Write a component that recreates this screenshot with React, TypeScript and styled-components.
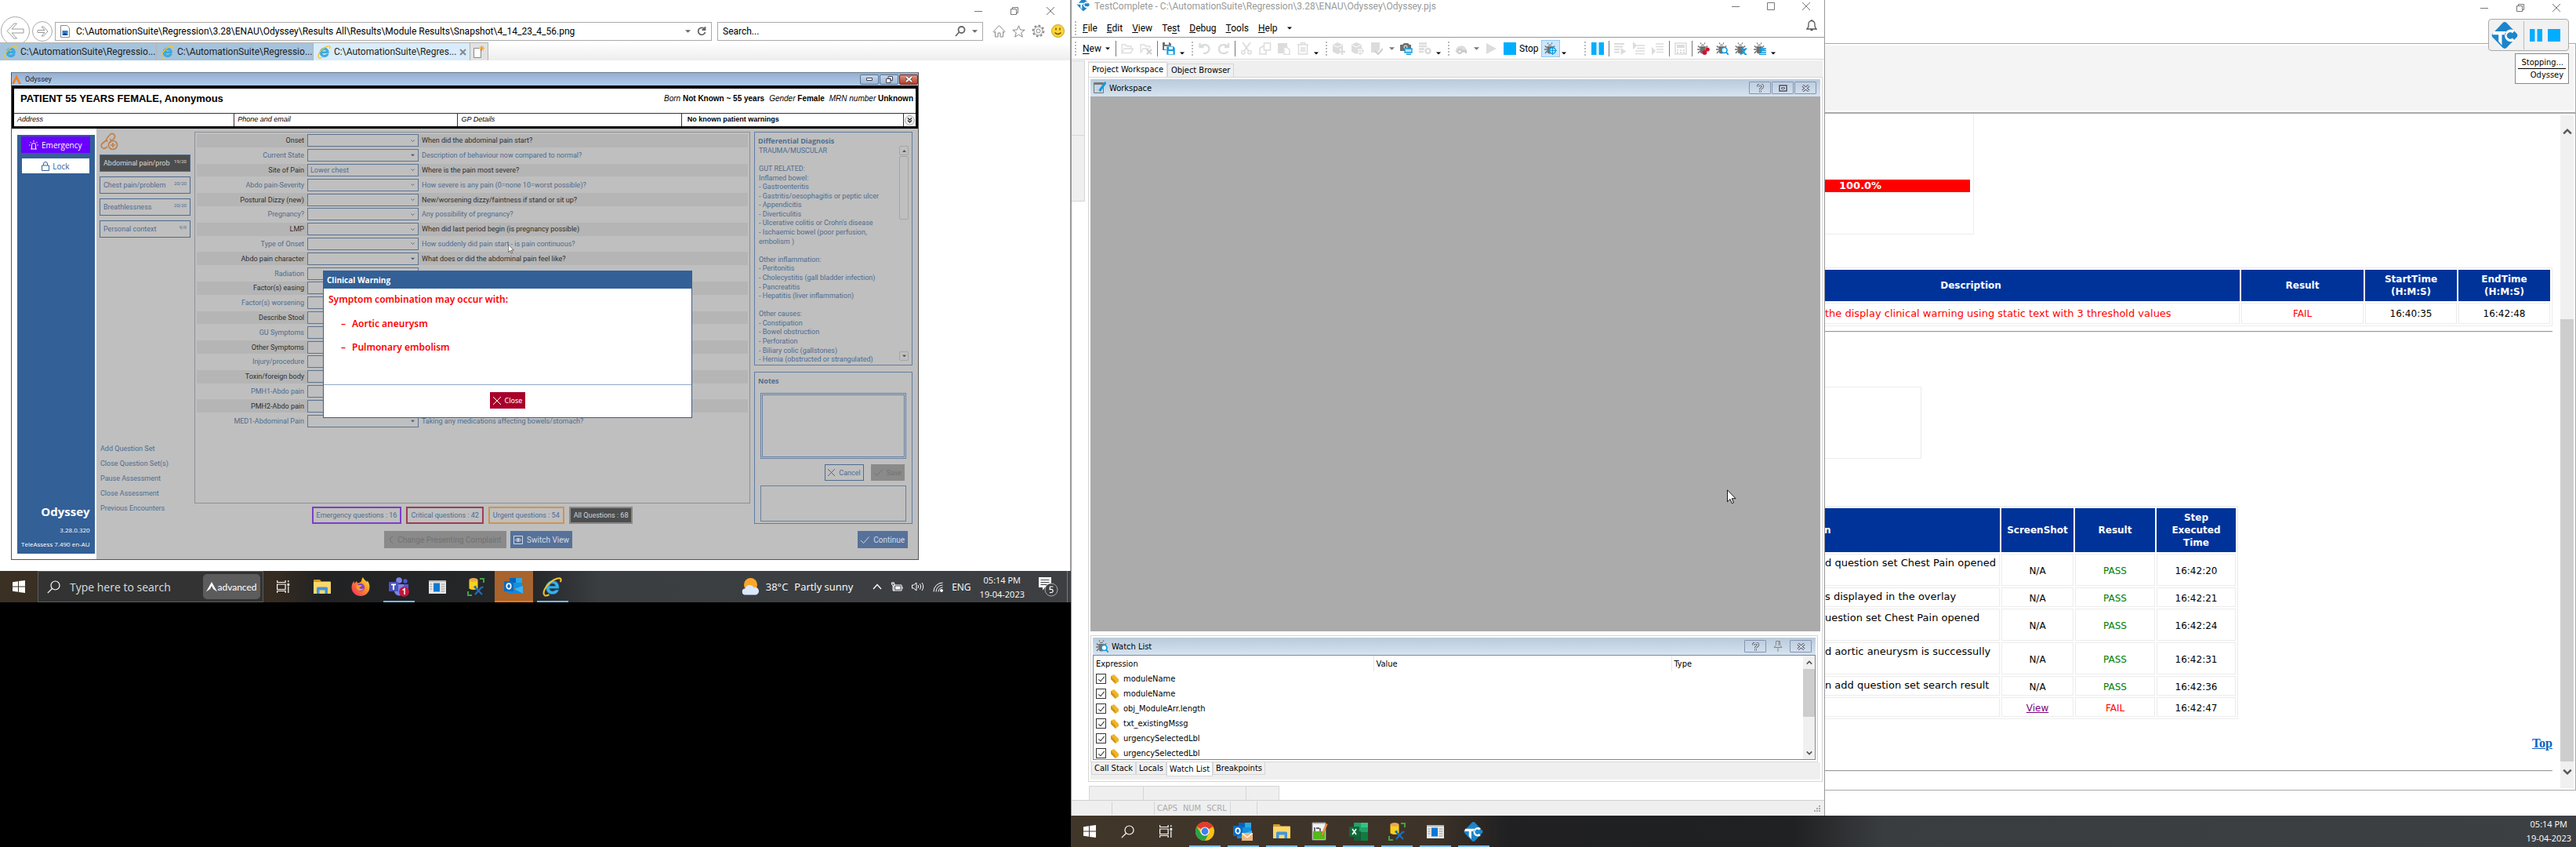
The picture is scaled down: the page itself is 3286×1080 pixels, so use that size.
import React from "react";
import styled, { createGlobalStyle, css } from "styled-components";

const UI = `"Open Sans", "Noto Sans", sans-serif`;
const NARROW = `Roboto, "Open Sans", sans-serif`;
const TAHOMA = `"DejaVu Sans Condensed", "DejaVu Sans", sans-serif`;
const VERDANA = `"DejaVu Sans", sans-serif`;
const ARIAL = `"Liberation Sans", Arial, sans-serif`;

const Global = createGlobalStyle`
  *, *::before, *::after { box-sizing: border-box; }
  body { margin: 0; background: #000; font-family: ${UI}; font-size: 12px; color: #000; }
  button, input, select, textarea { font: inherit; color: inherit; margin: 0; border-radius: 0; }
  button { border: 0; background: none; padding: 0; }
  svg { display: block; flex: none; }
`;

/* ---------- shared ---------- */

const Desktop = styled.div`
  display: flex;
  height: 100vh;
  overflow: hidden;
`;
const LeftMonitor = styled.section`
  flex: 1366 1 0;
  min-width: 0;
  background: #000;
`;
const RightMonitor = styled.section`
  flex: 1920 1 0;
  min-width: 0;
  display: flex;
  flex-direction: column;
`;
const Spacer = styled.div`
  flex: 1;
`;
const Caption = styled.div<{ $gap: number }>`
  display: flex;
  justify-content: flex-end;
  align-items: center;
  gap: ${(p) => p.$gap}px;
`;
const Center = styled.button`
  display: flex;
  align-items: center;
  justify-content: center;
`;

const MinIcon = () => (
  <svg width="10" height="10" viewBox="0 0 10 10"><path d="M0 5.5h10" stroke="#777" fill="none" /></svg>
);
const MaxIcon = () => (
  <svg width="10" height="10" viewBox="0 0 10 10"><path d="M.5.5h9v9h-9z" stroke="#777" fill="none" /></svg>
);
const RestoreIcon = () => (
  <svg width="10" height="10" viewBox="0 0 10 10"><path d="M.5 2.5h7v7h-7zM2.5 2.5v-2h7v7h-2" stroke="#777" fill="none" /></svg>
);
const CloseIcon = ({ c = "#777", s = 10, w = 1 }: { c?: string; s?: number; w?: number }) => (
  <svg width={s} height={s} viewBox="0 0 10 10"><path d="M0 0l10 10M10 0L0 10" stroke={c} strokeWidth={w} fill="none" /></svg>
);
const Down = ({ c = "#666", w = 7 }: { c?: string; w?: number }) => (
  <svg width={w} height="4" viewBox="0 0 8 4"><path d="M0 0h8L4 4z" fill={c} /></svg>
);
const Chevron = ({ up = false, c = "#555", s = 9 }: { up?: boolean; c?: string; s?: number }) => (
  <svg width={s} height={s} viewBox="0 0 10 10"><path d={up ? "M1 7l4-4 4 4" : "M1 3l4 4 4-4"} stroke={c} strokeWidth="2" fill="none" /></svg>
);
const Cursor = () => (
  <svg width="12" height="19" viewBox="0 0 12 19"><path d="M.5.8v15l3.500-3.300 2.300 5.300 2.200-1-2.300-5.100h4.800z" fill="#fff" stroke="#000" strokeWidth=".9" /></svg>
);
const CursorSpot = styled.div<{ $x: number; $y: number }>`
  position: absolute;
  left: ${(p) => p.$x}px;
  top: ${(p) => p.$y}px;
`;

/* ---------- Internet Explorer window ---------- */

const IeWindow = styled.div`
  background: #fff;
  border-right: 1px solid #999;
  padding-bottom: 14px;
  font-family: ${NARROW};
`;
const IeCaption = styled(Caption)`
  height: 27px;
  padding-right: 20px;
`;
const IeNav = styled.div`
  display: flex;
  align-items: center;
  height: 27px;
  padding: 0 7px 2px 1px;
`;
const RoundButton = styled.button<{ $s: number }>`
  flex: none;
  width: ${(p) => p.$s}px;
  height: ${(p) => p.$s}px;
  margin: -8px 3px -8px 0;
  border: 1px solid #a9a9a9;
  border-radius: 50%;
  background: #fff;
  display: flex;
  align-items: center;
  justify-content: center;
`;
const Field = styled.label<{ $w?: number }>`
  display: flex;
  align-items: center;
  gap: 8px;
  height: 24px;
  padding: 0 6px;
  border: 1px solid #aaa;
  ${(p) => (p.$w ? css`width: ${p.$w}px; flex: none; margin: 0 12px 0 7px;` : css`flex: 1;`)}
`;
const FieldInput = styled.input`
  flex: 1;
  min-width: 0;
  border: 0;
  padding: 0;
  background: none;
  outline: 0;
`;
const IeTools = styled.div`
  display: flex;
  gap: 8px;
  align-items: center;
`;
const IeTabs = styled.div`
  display: flex;
  height: 23px;
  background: linear-gradient(#fff, #ededed);
`;
const IeTab = styled.button<{ $on?: boolean }>`
  width: 200px;
  display: flex;
  align-items: center;
  gap: 4px;
  padding-left: 5px;
  border: 1px solid #b4b4b4;
  border-width: 1px 1px 0 0;
  background: ${(p) => (p.$on ? "#d9ecfb" : "#a5c3dc")};
  color: #222;
  white-space: nowrap;
  text-align: left;
`;
const TabText = styled.span`
  flex: 1;
`;
const NewTab = styled(Center)`
  width: 23px;
  border: 1px solid #b4b4b4;
  border-width: 1px 1px 0 0;
  background: #e2e2e2;
`;
const IeIcon = ({ s = 17 }: { s?: number }) => (
  <svg width={s} height={s} viewBox="0 0 22 22">
    <path d="M18.500 12.500H7.800c.2 2.200 1.600 3.300 3.600 3.300 1.500 0 2.500-.5 3.100-1.500h3.700c-1 3-3.500 4.700-6.900 4.700-4.300 0-7.300-2.900-7.300-7.300S7.100 4 11.300 4c4.600 0 7.400 3.200 7.200 8.500zM14.700 10c-.2-1.900-1.400-3-3.400-3-1.900 0-3.200 1.100-3.500 3z" fill="#38b3e8" stroke="#1b80c0" strokeWidth=".6" />
    <path d="M2.500 20.500C-.5 18 3 10 9 5.500 14 1.600 19.500.2 20.500 2c.5.900.2 2.200-.4 3.400M2.500 20.500c1.300.6 3.300 0 5-1" fill="none" stroke="#f5c42c" strokeWidth="1.800" />
  </svg>
);

/* ---------- Odyssey window ---------- */

const OdyWindow = styled.div`
  position: relative;
  margin: 15px 0 0 14px;
  max-width: 1158px;
  border: 1px solid #555;
  border-top-color: #6d7f92;
`;
const OdyTitle = styled.div`
  display: flex;
  align-items: center;
  gap: 5px;
  height: 16px;
  font-size: 9px;
  color: #223;
  background: linear-gradient(#93afd0, #b3cceb);
`;
const AeroButton = styled(Center)<{ $red?: boolean }>`
  width: 24px;
  height: 13px;
  margin-right: -4px;
  border: 1px solid ${(p) => (p.$red ? "#7a2a22" : "#5d7593")};
  border-radius: 2px;
  background: ${(p) => (p.$red ? "linear-gradient(#dd8f80, #bd3c22)" : "linear-gradient(#c4d6ea, #9cb6d4)")};
  &:last-child { margin-right: 0; }
`;
const PatientFrame = styled.div`
  border: 4px solid #000;
  border-width: 4px 3px 3px 3px;
  background: #fff;
  font-family: ${ARIAL};
`;
const PatientTop = styled.div`
  display: flex;
  align-items: center;
  justify-content: space-between;
  height: 31px;
  padding: 0 3px 6px 8px;
  font-size: 10px;
`;
const PatientName = styled.h1`
  margin: 0;
  font-size: 13px;
`;
const Facts = styled.div`
  display: flex;
  gap: 6px;
`;
const PatientCols = styled.div`
  display: grid;
  grid-template-columns: 280fr 285fr 285fr 283fr 16px;
  height: 17px;
  border-top: 1px solid #333;
  font-size: 9px;
  line-height: 15px;
  font-style: italic;
  > * + * { border-left: 1px solid #333; }
  > * { padding-left: 4px; }
  > b { padding-left: 7px; font-style: normal; }
  > button { padding: 0; }
`;
const OdyBody = styled.div`
  display: grid;
  grid-template-columns: 108px 1fr;
  background: #fff;
`;
const SideWrap = styled.div`
  padding: 8px 7px 7px 7px;
  display: flex;
`;
const Side = styled.aside`
  flex: 1;
  display: flex;
  flex-direction: column;
  background: #336097;
  padding: 2px 6px 3px 5px;
  color: #fff;
  font-family: ${UI};
  font-size: 8px;
  text-align: right;
  line-height: 18px;
  white-space: nowrap;
`;
const SideButton = styled(Center)<{ $primary?: boolean }>`
  height: 21px;
  gap: 4px;
  font-size: 10px;
  background: ${(p) => (p.$primary ? "#6a00ff" : "#fff")};
  color: ${(p) => (p.$primary ? "#fff" : "#336097")};
  & + & { height: 19px; margin: 7px 1px 0; }
`;
const Brand = styled.b`
  font-size: 15px;
  line-height: 30px;
`;
const Work = styled.div`
  background: #bfbfbf;
  color: #4f6c8f;
  font-size: 9px;
  display: grid;
  grid-template-columns: 116px 1fr 202px;
  grid-template-rows: 474px 22px 27px;
  column-gap: 5px;
  row-gap: 4px;
  padding: 4px 7px 14px 4px;
`;
const SetColumn = styled.div`
  grid-row: 1 / 3;
  display: flex;
  flex-direction: column;
`;
const SetButton = styled.button<{ $on?: boolean }>`
  display: flex;
  justify-content: space-between;
  height: 22px;
  margin-bottom: 6px;
  padding: 4px 4px 0;
  font-size: 9px;
  line-height: 12px;
  border: 1px solid #4f6c8f;
  background: ${(p) => (p.$on ? "#4d4d4d" : "transparent")};
  color: ${(p) => (p.$on ? "#d8d8d8" : "#4f6c8f")};
  small { font-size: 6px; line-height: 8px; }
`;
const LinkIconBox = styled.div`
  height: 29px;
  padding: 1px 0 0 1px;
`;
const SideLink = styled.a`
  color: #4f6c8f;
  text-decoration: none;
  line-height: 19px;
  padding-left: 1px;
`;
const LinkList = styled.nav`
  margin-top: auto;
  padding-bottom: 10px;
  display: flex;
  flex-direction: column;
`;
const Questions = styled.div`
  border: 1px solid #8e9097;
  padding: 2px 2px 0;
`;
const QuestionList = styled.div`
  display: grid;
  grid-template-rows: repeat(20, 1fr);
  height: 376px;
`;
const Question = styled.label<{ $alt?: boolean }>`
  display: grid;
  grid-template-columns: 137px 142px 1fr;
  align-items: center;
  column-gap: 4px;
  margin-bottom: 2px;
  background: ${(p) => (p.$alt ? "#b5b5b5" : "transparent")};
  color: ${(p) => (p.$alt ? "#2e2e2e" : "#4f6c8f")};
  > :first-child { text-align: right; }
  white-space: nowrap;
`;
const SelectBox = styled.span`
  display: grid;
  align-items: center;
  height: 16px;
  border: 1px solid #5d7592;
  background: #bfbfbf;
  color: #4f6c8f;
  > * { grid-area: 1 / 1; }
  > svg { justify-self: end; margin-right: 4px; pointer-events: none; }
`;
const Select = styled.select`
  appearance: none;
  width: 100%;
  border: 0;
  outline: 0;
  padding: 0 3px;
  background: none;
`;
const SideStack = styled.div`
  grid-row: 1 / 3;
  grid-column: 3;
  display: flex;
  flex-direction: column;
  gap: 8px;
`;
const Panel = styled.section<{ $h: number }>`
  height: ${(p) => p.$h}px;
  border: 1px solid #5f7da3;
  padding: 5px 4px 2px 4px;
  display: flex;
  flex-direction: column;
`;
const PanelTitle = styled.h2`
  margin: 0;
  font-family: ${UI};
  font-size: 9px;
  line-height: 12px;
`;
const DiagBody = styled.div`
  display: grid;
  grid-template-columns: 1fr 12px;
  flex: 1;
  min-height: 0;
`;
const DiagText = styled.div`
  overflow: hidden;
  padding-left: 1px;
  display: grid;
  grid-template-rows: repeat(24, 1fr);
  height: 278px;
  align-items: center;
  white-space: nowrap;
`;
const DiagScroll = styled.div`
  display: flex;
  flex-direction: column;
  justify-content: space-between;
  padding-bottom: 4px;
`;
const ScrollBit = styled(Center)<{ $h: number }>`
  height: ${(p) => p.$h}px;
  border: 1px solid #a5a5a5;
  border-radius: 2px;
`;
const ScrollTop = styled.div`
  display: grid;
  gap: 1px;
`;
const Notes = styled.textarea<{ $h: number }>`
  display: block;
  height: ${(p) => p.$h}px;
  margin: 9px 3px 0 3px;
  border: ${(p) => (p.$h > 60 ? "3px double" : "1px solid")} #6581a5;
  background: none;
  resize: none;
  outline: 0;
`;
const Actions = styled.div`
  display: flex;
  gap: 9px;
  justify-content: flex-end;
  padding: 7px 5px 0 0;
  & + textarea { margin-top: 6px; }
`;
const FlatButton = styled(Center)<{ $kind?: "blue" | "grey" | "dark" | "line" | "red"; $line?: string }>`
  height: 21px;
  gap: 5px;
  padding: 0 3px;
  white-space: nowrap;
  font-size: 9px;
  border: 1px solid ${(p) => p.$line || "transparent"};
  ${(p) => p.$kind === "blue" && css`background: #56719a; color: #d4dbe4; font-size: 10px;`}
  ${(p) => p.$kind === "grey" && css`background: #8a8a8a; color: #727272;`}
  ${(p) => p.$kind === "dark" && css`background: #4d4d4d; color: #d5d5d5; border-color: #888;`}
  ${(p) => p.$kind === "red" && css`background: #a8002b; color: #fff;`}
`;
const ChangeButton = styled(FlatButton)`
  font-size: 10px;
  width: 156px;
`;
const Filters = styled.div`
  grid-column: 2;
  display: flex;
  justify-content: center;
  gap: 6px;
  > button { height: 22px; padding: 0 4px; border-width: 2px; }
`;
const BottomBar = styled.div`
  grid-column: 2 / 4;
  padding-top: 5px;
  display: grid;
  grid-template-columns: 1fr 202px;
  > div { display: flex; justify-content: center; gap: 5px; padding-left: 10px; }
  > div + div { justify-content: flex-end; padding-right: 6px; }
  button { height: 22px; }
`;
const Dialog = styled.div`
  position: absolute;
  left: 397px;
  top: 252px;
  width: 471px;
  height: 188px;
  display: flex;
  flex-direction: column;
  background: #fff;
  border: 1px solid #336097;
  color: #f00;
  font-family: "Noto Sans", ${UI};
`;
const DialogTitle = styled.h2`
  margin: 0;
  padding-left: 4px;
  background: #336097;
  color: #fff;
  font-family: ${UI};
  font-size: 10px;
  line-height: 22px;
`;
const DialogBody = styled.div`
  flex: 1;
  padding: 4px 6px;
  font-size: 12px;
  font-weight: 600;
  line-height: 20px;
`;
const DialogList = styled.ul`
  list-style: none;
  margin: 6px 0 0;
  padding: 0 0 0 16px;
  line-height: 30px;
  li { display: flex; gap: 8px; }
`;
const DialogFoot = styled.div`
  height: 42px;
  display: flex;
  justify-content: center;
  padding-top: 9px;
  border-top: 1px solid #8faacb;
`;

const questions: [string, string, string?, boolean?][] = [
  ["Onset", "When did the abdominal pain start?"],
  ["Current State", "Description of behaviour now compared to normal?", "", true],
  ["Site of Pain", "Where is the pain most severe?", "Lower chest"],
  ["Abdo pain-Severity", "How severe is any pain (0=none 10=worst possible)?"],
  ["Postural Dizzy (new)", "New/worsening dizzy/faintness if stand or sit up?"],
  ["Pregnancy?", "Any possibility of pregnancy?"],
  ["LMP", "When did last period begin (is pregnancy possible)"],
  ["Type of Onset", "How suddenly did pain start - is pain continuous?"],
  ["Abdo pain character", "What does or did the abdominal pain feel like?", "", true],
  ["Radiation", ""],
  ["Factor(s) easing", ""],
  ["Factor(s) worsening", ""],
  ["Describe Stool", ""],
  ["GU Symptoms", ""],
  ["Other Symptoms", ""],
  ["Injury/procedure", ""],
  ["Toxin/foreign body", ""],
  ["PMH1-Abdo pain", ""],
  ["PMH2-Abdo pain", ""],
  ["MED1-Abdominal Pain", "Taking any medications affecting bowels/stomach?", "", true],
];
const diagnosis = [
  "TRAUMA/MUSCULAR", "", "GUT RELATED:", "Inflamed bowel:", "- Gastroenteritis",
  "- Gastritis/oesophagitis or peptic ulcer", "- Appendicitis", "- Diverticulitis",
  "- Ulcerative colitis or Crohn's disease", "- Ischaemic bowel (poor perfusion,", "embolism )", "",
  "Other inflammation:", "- Peritonitis", "- Cholecystitis (gall bladder infection)", "- Pancreatitis",
  "- Hepatitis (liver inflammation)", "", "Other causes:", "- Constipation", "- Bowel obstruction",
  "- Perforation", "- Biliary colic (gallstones)", "- Hernia (obstructed or strangulated)",
];

const Tick = ({ c }: { c: string }) => (
  <svg width="11" height="9" viewBox="0 0 11 9"><path d="M0 5l3.500 3.500L10.500.5" stroke={c} fill="none" /></svg>
);

function Odyssey() {
  return (
    <OdyWindow>
      <OdyTitle>
        <svg width="12" height="12" viewBox="0 0 12 12"><path d="M0 12L6 0l6 12H9L6 6l-3 6z" fill="#f58220" /></svg>
        Odyssey
        <Spacer />
        <AeroButton aria-label="Minimise"><svg width="8" height="4" viewBox="0 0 8 4"><path d="M.5.5h7v3h-7z" fill="#fff" stroke="#445" /></svg></AeroButton>
        <AeroButton aria-label="Restore"><svg width="9" height="9" viewBox="0 0 9 9"><path d="M3 .5h5.500v5H6V3H3zM.5 3.500H6v5H.5z" fill="#fff" stroke="#445" /></svg></AeroButton>
        <AeroButton $red aria-label="Close"><svg width="9" height="8" viewBox="0 0 9 8"><path d="M1 1l7 6M8 1L1 7" stroke="#444" strokeWidth="3.400" /><path d="M1 1l7 6M8 1L1 7" stroke="#fff" strokeWidth="2" /></svg></AeroButton>
      </OdyTitle>
      <PatientFrame>
        <PatientTop>
          <PatientName>PATIENT 55 YEARS FEMALE, Anonymous</PatientName>
          <Facts>
            <span><i>Born</i> <b>Not Known ~ 55 years</b></span>
            <span><i>Gender</i> <b>Female</b></span>
            <span><i>MRN number</i> <b>Unknown</b></span>
          </Facts>
        </PatientTop>
        <PatientCols>
          <span>Address</span>
          <span>Phone and email</span>
          <span>GP Details</span>
          <b>No known patient warnings</b>
          <Center aria-label="Expand"><svg width="13" height="13" viewBox="0 0 13 13"><circle cx="6.500" cy="6.500" r="6" fill="#eee" stroke="#aaa" /><path d="M4 3.500L6.500 6 9 3.500M4 6.500L6.500 9 9 6.500" stroke="#222" strokeWidth="1.200" fill="none" /></svg></Center>
        </PatientCols>
      </PatientFrame>
      <OdyBody>
        <SideWrap>
          <Side>
            <SideButton $primary>
              <svg width="12" height="12" viewBox="0 0 12 12"><path d="M2 11h8M3.500 11V6a2.500 2.500 0 015 0v5M6 0v2M1.500 2L3 3.500M10.500 2L9 3.500M0 6h1.500M10.500 6H12" stroke="#fff" fill="none" /></svg>
              Emergency
            </SideButton>
            <SideButton>
              <svg width="10" height="12" viewBox="0 0 10 12"><path d="M.5 5h9v6.500h-9zM2.500 5V3a2.500 2.500 0 015 0v2" stroke="#336097" fill="none" /></svg>
              Lock
            </SideButton>
            <Spacer />
            <Brand>Odyssey</Brand>
            <span>3.28.0.320</span>
            <span>TeleAssess 7.490 en-AU</span>
          </Side>
        </SideWrap>
        <Work>
          <SetColumn>
            <LinkIconBox>
              <svg width="23" height="23" viewBox="0 0 23 23" fill="none" stroke="#c08048" strokeWidth="1.700"><path d="M9 11.500a3.500 3.500 0 010-5l3.500-4a3.500 3.500 0 015 5L15 10M12.500 8a3.500 3.500 0 010 5M8 9.500L2.500 14a3.500 3.500 0 004.500 5.500l2-1.500" /><circle cx="16" cy="16" r="5.500" /><path d="M16 13v6M13 16h6" /></svg>
            </LinkIconBox>
            <SetButton $on>Abdominal pain/prob<small>19/20</small></SetButton>
            <SetButton>Chest pain/problem<small>20/20</small></SetButton>
            <SetButton>Breathlessness<small>20/20</small></SetButton>
            <SetButton>Personal context<small>9/9</small></SetButton>
            <LinkList>
              {["Add Question Set", "Close Question Set(s)", "Pause Assessment", "Close Assessment", "Previous Encounters"].map((t) => (
                <SideLink href="#" key={t}>{t}</SideLink>
              ))}
            </LinkList>
          </SetColumn>
          <Questions>
            <QuestionList>
              {questions.map(([label, hint, value, solid], i) => (
                <Question key={label} $alt={i % 2 === 0}>
                  <span>{label}</span>
                  <SelectBox>
                    <Select aria-label={label}><option>{value || ""}</option></Select>
                    {solid ? <Down c="#3d5675" w={5} /> : <Chevron c="#4f6c8f" s={5} />}
                  </SelectBox>
                  <span>{hint}</span>
                </Question>
              ))}
            </QuestionList>
          </Questions>
          <SideStack>
            <Panel $h={298}>
              <PanelTitle>Differential Diagnosis</PanelTitle>
              <DiagBody>
                <DiagText>{diagnosis.map((t, i) => <span key={i}>{t}</span>)}</DiagText>
                <DiagScroll>
                  <ScrollTop>
                    <ScrollBit $h={12} aria-label="Scroll up"><svg width="5" height="3" viewBox="0 0 6 3"><path d="M0 3h6L3 0z" fill="#444" /></svg></ScrollBit>
                    <ScrollBit $h={81} aria-label="Scroll thumb" />
                  </ScrollTop>
                  <ScrollBit $h={12} aria-label="Scroll down"><Down c="#444" w={5} /></ScrollBit>
                </DiagScroll>
              </DiagBody>
            </Panel>
            <Panel $h={194}>
              <PanelTitle>Notes</PanelTitle>
              <Notes $h={88} aria-label="Notes" />
              <Actions>
                <FlatButton $line="#4f6c8f"><CloseIcon c="#3c5d88" s={9} />Cancel</FlatButton>
                <FlatButton $kind="grey"><Tick c="#727272" />Save</FlatButton>
              </Actions>
              <Notes $h={48} aria-label="Saved notes" readOnly />
            </Panel>
          </SideStack>
          <Filters>
            <FlatButton $line="#7a3fc8">Emergency questions : 16</FlatButton>
            <FlatButton $line="#9c3d54">Critical questions : 42</FlatButton>
            <FlatButton $line="#cf9350">Urgent questions : 54</FlatButton>
            <FlatButton $kind="dark">All Questions : 68</FlatButton>
          </Filters>
          <BottomBar>
            <div>
              <ChangeButton $kind="grey"><svg width="6" height="10" viewBox="0 0 6 10"><path d="M5 0L1 5l4 5" stroke="#727272" fill="none" /></svg>Change Presenting Complaint</ChangeButton>
              <FlatButton $kind="blue"><svg width="12" height="11" viewBox="0 0 12 11"><path d="M.5.5h11v10H.5zM2.500 5.500Q6 1.500 9.500 5.500 6 9.500 2.500 5.500z" stroke="#d4dbe4" fill="none" /><circle cx="6" cy="5.500" r="1.400" fill="#d4dbe4" /></svg>Switch View</FlatButton>
            </div>
            <div>
              <FlatButton $kind="blue"><Tick c="#d4dbe4" />Continue</FlatButton>
            </div>
          </BottomBar>
        </Work>
      </OdyBody>
      <Dialog role="dialog" aria-label="Clinical Warning">
        <DialogTitle>Clinical Warning</DialogTitle>
        <DialogBody>
          Symptom combination may occur with:
          <DialogList>
            <li><span>–</span>Aortic aneurysm</li>
            <li><span>–</span>Pulmonary embolism</li>
          </DialogList>
        </DialogBody>
        <DialogFoot>
          <FlatButton $kind="red"><CloseIcon c="#fff" s={10} />Close</FlatButton>
        </DialogFoot>
      </Dialog>
      <CursorSpot $x={633} $y={218}><svg width="8" height="13" viewBox="0 0 12 19"><path d="M.5.8v15l3.500-3.300 2.300 5.300 2.200-1-2.300-5.100h4.800z" fill="#fff" stroke="#333" /></svg></CursorSpot>
    </OdyWindow>
  );
}

/* ---------- taskbars ---------- */

const Bar = styled.footer<{ $bg: string }>`
  display: flex;
  flex: none;
  height: 40px;
  background: ${(p) => p.$bg};
  color: #fff;
`;
const TaskCell = styled(Center)<{ $w?: number; $line?: string; $hot?: boolean }>`
  width: ${(p) => p.$w || 49}px;
  position: relative;
  ${(p) => p.$hot && css`background: #a9632c;`}
  &::after {
    content: "";
    position: absolute;
    bottom: 0;
    left: ${(p) => (p.$hot ? 0 : 5)}px;
    right: ${(p) => (p.$hot ? 0 : 4)}px;
    height: 2px;
    background: ${(p) => p.$line || "transparent"};
  }
`;
const SearchBox = styled.label`
  display: flex;
  align-items: center;
  gap: 12px;
  width: 288px;
  padding: 0 3px 0 11px;
  background: #333;
  border: 1px solid #5b5b5b;
`;
const SearchInput = styled.input`
  flex: 1;
  min-width: 0;
  border: 0;
  outline: 0;
  padding: 0;
  background: none;
  font-size: 14px;
  color: #ddd;
  &::placeholder { color: #ddd; opacity: 1; }
`;
const AdvPill = styled.span`
  display: flex;
  align-items: center;
  justify-content: center;
  width: 73px;
  height: 32px;
  border-radius: 5px;
  background: #5c5c5c;
  font-size: 12px;
  font-family: Lato, sans-serif;
  color: #fff;
`;
const Tray = styled.div`
  display: flex;
  align-items: center;
  gap: 11px;
  font-size: 12px;
`;
const Weather = styled.span`
  display: flex;
  align-items: center;
  gap: 8px;
  margin-right: 14px;
  font-size: 13px;
`;
const Clock = styled.time<{ $pad: number }>`
  padding: 2px ${(p) => p.$pad}px 0 0;
  text-align: center;
  font-size: 11px;
  line-height: 18px;
  color: #fff;
`;
const TrayEnd = styled.div`
  align-self: stretch;
  width: 5px;
  border-left: 1px solid #777;
`;

const WinLogo = () => (
  <svg width="16" height="16" viewBox="0 0 16 16" fill="#fff"><path d="M0 2.300L7 1.300V7.500H0zM8 1.100L16 0v7.500H8zM0 8.500h7v6.200L0 13.700zM8 8.500h8V16l-8-1.100z" /></svg>
);
const SearchGlyph = () => (
  <svg width="17" height="17" viewBox="0 0 17 17" fill="none" stroke="#fff" strokeWidth="1.200"><circle cx="10.500" cy="6.500" r="5.500" /><path d="M6.500 10.500L.8 16.200" /></svg>
);
const TaskView = () => (
  <svg width="17" height="16" viewBox="0 0 17 16" fill="none" stroke="#fff" strokeWidth="1.200"><path d="M.6 0v2.500h10.500V0M.6 5h10.500v6.500H.6zM.6 16v-2.500h10.500V16M14.800 0v2.500M14.800 7.500V16" /><path d="M13.500 4h2.700v2.800h-2.700z" fill="#fff" stroke="none" /></svg>
);
const Folder = () => (
  <svg width="22" height="18" viewBox="0 0 22 18"><path d="M0 1q0-1 1-1h7l2 2.500H0z" fill="#d99c1e" /><path d="M0 2.500h21q1 0 1 1V18H0z" fill="#ffd76a" /><path d="M4 18v-7q0-1.500 1.500-1.500h11Q18 9.500 18 11v7h-3.500v-4.500h-7V18z" fill="#3f97dd" /></svg>
);
const Firefox = () => (
  <svg width="24" height="24" viewBox="0 0 24 24">
    <defs><linearGradient id="ff" x1="1" y1="0" x2="0" y2="1"><stop offset="0" stopColor="#fff04a" /><stop offset=".4" stopColor="#ff9322" /><stop offset="1" stopColor="#f0256b" /></linearGradient></defs>
    <path d="M15 0c1 3 3.500 4 5 6 1-.5.500-2 .500-2 3 4 3.500 8 2.500 12-1.500 5-6 8-11 8C6 24 .5 19.500.5 13 .5 9 2 7 3.500 5L4 8l3-3 1 2.500c2 0 4-1 5-2.500.500-2 .500-3.500 2-5z" fill="url(#ff)" /><circle cx="12" cy="13" r="5" fill="#7a3fd0" /><path d="M6 11c3-2 5 0 8-1-1 2.500-3 2-3.500 3.500 1 2 4 1.500 5.500.500-1 3.500-6 4.500-8.500 1.500z" fill="#ff9a2e" />
  </svg>
);
const Teams = () => (
  <svg width="26" height="25" viewBox="0 0 26 25">
    <circle cx="13" cy="4" r="3.800" fill="#7b83eb" /><circle cx="21" cy="5" r="2.700" fill="#5059c9" /><path d="M17 9h8v7a4 4 0 01-8 2z" fill="#5059c9" /><path d="M7 9h12v8a6 6 0 01-12 1z" fill="#7b83eb" /><path d="M0 6h12v12H0z" fill="#4b53bc" /><path d="M3 8.500h6v1.800H7V16H5v-5.700H3z" fill="#fff" /><circle cx="19.500" cy="18.500" r="6.500" fill="#c4163a" /><path d="M17.500 16.500l2.500-1.800V22" stroke="#fff" strokeWidth="1.500" fill="none" />
  </svg>
);
const AppWindow = () => (
  <svg width="22" height="17" viewBox="0 0 22 17"><path d="M0 0h22v17H0z" fill="#e8e8e8" /><path d="M0 0h22v2H0z" fill="#b8b8b8" /><path d="M6 3.500h8v11H6z" fill="#0a78d4" /><path d="M1.500 5h3M1.500 8h3M1.500 11h3M15.500 5h5M15.500 8h5M15.500 11h5M15.500 14h5" stroke="#999" /></svg>
);
const DbTool = () => (
  <svg width="22" height="23" viewBox="0 0 22 23"><path d="M2.500 3v10.500q5.500 3 11 0V3z" fill="#fbd21a" /><ellipse cx="8" cy="2.500" rx="5.500" ry="2.400" fill="#e9a94c" /><path d="M16 1h5v5M1 17v5h5" stroke="#3fa344" strokeWidth="2" fill="none" /><path d="M10 21l8-9M10 12l9 9M8.500 12l3-1.500M17 12.500l3.500-1" stroke="#1a6fc0" strokeWidth="2.200" /></svg>
);
const Outlook = ({ mail = false }: { mail?: boolean }) => (
  <svg width="25" height="24" viewBox="0 0 25 24"><path d="M7 1h16v13H7z" fill="#1490df" /><path d="M7 1h8v6H7z" fill="#0364b8" /><path d="M15 1h8v6h-8z" fill="#28a8ea" /><path d="M5 11l10 5 9-5v10H5z" fill="#1a85d8" /><path d="M24 11v10L13 15z" fill="#38b6f5" /><path d="M0 5h12v13H0z" fill="#0a6cc4" /><ellipse cx="6" cy="11.500" rx="2.700" ry="3.300" fill="none" stroke="#fff" strokeWidth="1.700" />{mail && <path d="M11 14h14v10H11z" fill="#ebb77c" />}{mail && <path d="M11.500 14.500l6.500 5.500 6.500-5.500" stroke="#fff" strokeWidth="1.300" fill="none" />}</svg>
);
const Chrome = () => (
  <svg width="24" height="24" viewBox="0 0 24 24"><circle cx="12" cy="12" r="12" fill="#fbc116" /><path d="M12 12L1.600 6a12 12 0 0120.800 0z" fill="#e33b2e" /><path d="M1.600 6L7.200 15 12 12l4.700 3L12 24A12 12 0 011.600 6z" fill="#2ba24c" /><circle cx="12" cy="12" r="5.600" fill="#fff" /><circle cx="12" cy="12" r="4.400" fill="#3f7ff0" /></svg>
);
const Notepad = () => (
  <svg width="21" height="24" viewBox="0 0 21 24"><path d="M1 1h17v22H1z" fill="#f4f4f4" stroke="#888" /><path d="M2 12h15v10H2z" fill="#56b81c" /><path d="M4 7v5M6 8h4M11 8v4" stroke="#333" strokeWidth="1.400" /><path d="M3 2h14" stroke="#777" strokeDasharray="1 1" /><path d="M18.500 2l2 1-6 14-2 1 .5-2.500z" fill="#f0a030" stroke="#a55" strokeWidth=".5" /></svg>
);
const Excel = () => (
  <svg width="24" height="23" viewBox="0 0 24 23"><path d="M6 0h9v11H6z" fill="#21a366" /><path d="M15 0h9v6h-9z" fill="#33c481" /><path d="M15 6h9v6h-9z" fill="#21a366" /><path d="M6 11h9v12H6z" fill="#185c37" /><path d="M15 12h9v11h-9z" fill="#107c41" /><path d="M0 5h13v13H0z" fill="#0e6b38" /><path d="M4 8l5 7M9 8l-5 7" stroke="#fff" strokeWidth="1.700" /></svg>
);
const TcLogo = ({ s = 24 }: { s?: number }) => (
  <svg width={s} height={s} viewBox="0 0 24 24"><path d="M12 0q1 0 2 1l9 9.500q1.200 1.500 0 3L14 23q-2 2-4 0L1 13.500q-1.200-1.500 0-3L10 1q1-1 2-1z" fill="#1d85c9" /><path d="M2 8.500h11v3H9.500V21l-3-3.500v-6H1zM21 8a5.500 5.500 0 100 8.500l-2-2a3 3 0 110-4.500z" fill="#fff" /></svg>
);

/* ---------- TestComplete ---------- */

const RightTop = styled.div`
  flex: 1;
  min-height: 0;
  display: flex;
`;
const TcWindow = styled.div`
  position: relative;
  flex: 961 1 0;
  min-width: 0;
  display: flex;
  flex-direction: column;
  background: #fff;
  border: 1px solid #999;
  border-width: 0 1px;
  font-family: ${NARROW};
`;
const TcTitle = styled.div`
  display: flex;
  align-items: center;
  gap: 6px;
  height: 16px;
  padding: 0 18px 0 7px;
  color: #999;
  > svg { margin-top: -4px; }
`;
const MenuRow = styled.nav`
  display: flex;
  align-items: center;
  height: 32px;
  padding: 8px 9px 0 0;
  border-bottom: 1px solid #999;
  > svg:last-child { margin-top: -6px; }
`;
const MenuItem = styled.button`
  margin-right: 12px;
  &::first-letter { text-decoration: underline; }
`;
const MenuPlain = styled(MenuItem)`
  &::first-letter { text-decoration: none; }
`;
const Toolbar = styled.div`
  display: flex;
  align-items: center;
  height: 28px;
  border-bottom: 1px solid #d6d6d6;
`;
const Grip = styled.span<{ $lead?: boolean }>`
  flex: none;
  width: ${(p) => (p.$lead ? 14 : 12)}px;
  height: 20px;
  background: radial-gradient(circle, #bbb 1px, transparent 1px) ${(p) => (p.$lead ? 3 : 6)}px 0 / 4px 4px repeat-y;
`;
const Sep = styled.span`
  flex: none;
  width: 1px;
  height: 20px;
  margin: 0 2px;
  background: #777;
`;
const Tool = styled(Center)<{ $w?: number; $on?: boolean }>`
  flex: none;
  width: ${(p) => p.$w || 24}px;
  height: 22px;
  ${(p) => p.$on && css`background: #cce6fb; outline: 1px solid #90c8f6; outline-offset: -1px;`}
`;
const CaretCell = styled.span`
  flex: none;
  width: 10px;
  display: flex;
  justify-content: center;
  padding-top: 12px;
`;
const NewButton = styled.button`
  width: 40px;
  display: flex;
  align-items: center;
  gap: 5px;
  text-align: left;
`;
const StopText = styled.button`
  width: 28px;
  text-align: left;
`;
const Under = styled.u`
  text-underline-offset: 2px;
`;
const TcBody = styled.div`
  flex: 1;
  min-height: 0;
  display: grid;
  grid-template-columns: 17px 1fr;
  column-gap: 4px;
  padding: 1px 2px 5px 0;
`;
const Strip = styled.div`
  height: 180px;
  background: #efefef;
  border: 1px solid #d6d6d6;
  border-left: 0;
  &::before {
    content: "";
    display: block;
    height: 95px;
    border-bottom: 1px solid #d6d6d6;
  }
`;
const WorkCol = styled.div`
  display: flex;
  flex-direction: column;
  min-width: 0;
  min-height: 0;
`;
const TopTabs = styled.div`
  display: flex;
  align-items: flex-end;
  height: 21px;
  background: #efefef;
`;
const TopTab = styled.button<{ $on?: boolean }>`
  height: ${(p) => (p.$on ? 19 : 17)}px;
  padding: 0 4px;
  border: 1px solid #d6d6d6;
  border-bottom: 0;
  background: ${(p) => (p.$on ? "#fff" : "#efefef")};
  font-family: ${TAHOMA};
  font-size: 11px;
  line-height: 16px;
  white-space: nowrap;
`;
const Frame = styled.div`
  flex: 1;
  min-height: 0;
  display: flex;
  flex-direction: column;
  border: 1px solid #d6d6d6;
  padding: 2px;
`;
const PaneHead = styled.div`
  flex: none;
  display: flex;
  align-items: center;
  gap: 4px;
  height: 22px;
  padding: 0 5px 0 4px;
  font-family: ${TAHOMA};
  font-size: 11px;
  background: linear-gradient(#b9cadb, #d6e3f0);
`;
const PaneButton = styled(Center)<{ $flat?: boolean }>`
  width: 28px;
  height: 16px;
  border: 1px solid ${(p) => (p.$flat ? "transparent" : "#8794b3")};
  border-radius: 1px;
  & + & { margin-left: -3px; }
`;
const Canvas = styled.div`
  flex: 1;
  background: #ababab;
`;
const WatchFrame = styled.div`
  flex: none;
  margin: 5px 3px 0 0;
  border: 1px solid #d6d6d6;
  padding: 2px;
`;
const WatchBox = styled.div`
  display: flex;
  height: 134px;
  border: 1px solid #83878f;
`;
const WatchClip = styled.div`
  flex: 1;
  overflow: hidden;
`;
const WatchTable = styled.table`
  width: 100%;
  table-layout: fixed;
  border-collapse: collapse;
  font-family: ${TAHOMA};
  font-size: 11px;
  th { height: 20px; padding: 0 3px; text-align: left; font-weight: normal; border-right: 1px solid #e5e5e5; }
  th:last-child { border: 0; }
  td { height: 19px; padding: 0 3px; }
`;
const WatchLabel = styled.label`
  display: flex;
  align-items: center;
  gap: 6px;
  line-height: 16px;
`;
const Check = styled.input`
  appearance: none;
  width: 13px;
  height: 13px;
  border: 1px solid #333;
  background: #fff;
  display: grid;
  place-items: center;
  &:checked::after {
    content: "";
    width: 4px;
    height: 8px;
    margin-top: -2px;
    border: solid #333;
    border-width: 0 1px 1px 0;
    transform: rotate(40deg);
  }
`;
const VScroll = styled.div<{ $w: number }>`
  flex: none;
  width: ${(p) => p.$w}px;
  display: flex;
  flex-direction: column;
  background: #f0f0f0;
`;
const ScrollArrow = styled(Center)<{ $h: number }>`
  height: ${(p) => p.$h}px;
`;
const Thumb = styled.div<{ $h: number; $top?: number }>`
  height: ${(p) => p.$h}px;
  margin-top: ${(p) => p.$top || 0}px;
  background: #cdcdcd;
`;
const BottomTabs = styled.div`
  flex: none;
  display: flex;
  height: 22px;
  padding-left: 1px;
  background: #efefef;
`;
const BottomTab = styled(TopTab)`
  height: ${(p) => (p.$on ? 18 : 16)}px;
  padding: 0 3px;
  border: 1px solid #d6d6d6;
  border-top: 0;
`;
const DockRow = styled.div`
  display: grid;
  grid-template-columns: 69px 131px 43px;
  height: 18px;
  margin-left: 22px;
  > span { background: #efefef; border: 1px solid #d6d6d6; border-width: 1px 0 0 1px; }
  > span:last-child { border-right-width: 1px; }
`;
const StatusBar = styled.div`
  display: grid;
  grid-template-columns: 52px 54px 97px 34px 1fr 14px;
  align-items: center;
  height: 20px;
  border-top: 1px solid #d0d0d0;
  background: #efefef;
`;
const StatusCell = styled.span<{ $bare?: boolean }>`
  display: flex;
  gap: 7px;
  height: 17px;
  padding-left: 3px;
  border-right: ${(p) => (p.$bare ? 0 : 1)}px solid #d6d6d6;
  color: #aaa;
  font-family: ${TAHOMA};
  font-size: 11px;
  line-height: 17px;
`;

const G = "#dcdcdc";
const D = "#6f6f6f";
const B = "#0f9be0";
const Ico = ({ children }: { children: React.ReactNode }) => (
  <svg width="16" height="16" viewBox="0 0 16 16" fill="none">{children}</svg>
);
const Bug = ({ children }: { children: React.ReactNode }) => (
  <Ico>
    <path d="M4.500 4a3 3 0 015 0z" fill={D} />
    <path d="M3.500 5h7v6a3.500 3.500 0 01-7 0z" fill={D} />
    <path d="M3.500 7L.8 4.500M3.500 9H0M3.500 11L1 14M10.500 7l2.700-2.500M10.500 9H14M5 2L4 .5M9 2l1-1.500" stroke={D} strokeWidth="1.300" />
    {children}
  </Ico>
);
const tools: Record<string, React.ReactNode> = {
  open: <Ico><path d="M1 13V3h5l1.500 2H13v3M1 13.500L4 8h11.500l-3 5.500z" stroke={G} strokeWidth="1.300" /></Ico>,
  openx: <Ico><path d="M1 13V3h5l1.500 2H13v3M1 13.500L4 8h7" stroke={G} strokeWidth="1.300" /><path d="M9 9l6 6M15 9l-6 6" stroke="#cfcfcf" strokeWidth="2" /></Ico>,
  save: <Ico><path d="M0 0h9l2 2v8H0z" fill={D} /><path d="M3 0h5v3H3zM2 5h6v4H2z" fill="#fff" /><path d="M5 5h9l2 2v9H5z" fill={B} stroke="#fff" strokeWidth=".6" /><path d="M8 6h5v3H8zM7.500 11h6v4h-6z" fill="#fff" /></Ico>,
  undo: <Ico><path d="M1.500 1v5h5M2 6c2-4 11-4 11.500 2 .3 4-3 6-7.500 6" stroke={G} strokeWidth="2.400" /></Ico>,
  redo: <Ico><path d="M14 1v5H9M13 6C10 1 2 2.500 2 8.500S9.500 16 13.500 11.500" stroke={G} strokeWidth="2.400" /></Ico>,
  cut: <Ico><path d="M3 0l8 11M13 0L5 11" stroke={G} strokeWidth="1.800" /><circle cx="3.800" cy="12.800" r="2.200" stroke={G} strokeWidth="1.500" /><circle cx="12" cy="12.800" r="2.200" stroke={G} strokeWidth="1.500" /></Ico>,
  copy: <Ico><path d="M6.500 1h8v9h-8zM6 4.500L1 7.500V15h8v-5" stroke={G} strokeWidth="1.500" /></Ico>,
  paste: <Ico><path d="M0 1h12v5H7v8H0z" fill={G} /><path d="M8 6.500h4l3 3v6H8z" stroke={G} fill="#fff" strokeWidth="1.400" /></Ico>,
  trash: <Ico><path d="M1 3h14M5.500 3V.8h5V3M2.500 3v12h11V3M6 6v6.500M8.200 6v6.500M10.400 6v6.500" stroke={G} strokeWidth="1.500" /></Ico>,
  boxadd: <Ico><path d="M0 3l6-3 7 3v5H9v6l-3 1-6-3z" fill={G} /><path d="M1 3.500L6 6l6-2.500" stroke="#fff" /><path d="M12 8v8M8 12h8" stroke={G} strokeWidth="2.400" /></Ico>,
  boxaim: <Ico><path d="M0 3l6-3 7 3v5L6 15l-6-3z" fill={G} /><path d="M1 3.500L6 6l6-2.500" stroke="#fff" /><circle cx="11" cy="11" r="3.600" fill="#fff" stroke={G} strokeWidth="1.400" /><path d="M11 6v10M6 11h10" stroke={G} /></Ico>,
  doc: <Ico><path d="M1 0h11v9l-4 4H1z" fill={G} /><path d="M6 11l4 4 6-7" stroke="#d0d0d0" strokeWidth="2.400" /></Ico>,
  camera: <Ico><path d="M0 3h3l2-2h5l2 2h2v5H8v3H0z" fill={D} /><circle cx="7" cy="6" r="2" stroke="#fff" /><path d="M6 8h9v5H6z" fill="#bfe3fa" stroke={B} strokeWidth="1.300" /><path d="M8 15.300h6" stroke={B} strokeWidth="1.400" /></Ico>,
  db: <Ico><path d="M0 1.500h10M0 5h10M0 8.500h7M0 12h6" stroke={G} strokeWidth="2.400" /><circle cx="11.500" cy="11" r="3" stroke={G} strokeWidth="2.600" /></Ico>,
  record: <Ico><path d="M1 13a7 7 0 1114-3l-2 3z" fill={G} /><path d="M7 11h8M14 11v3" stroke="#c8c8c8" strokeWidth="2" /><circle cx="6" cy="11.500" r="2.500" stroke="#c8c8c8" strokeWidth="1.800" fill="#fff" /></Ico>,
  play: <Ico><path d="M2 1l13 7-13 7z" fill={G} /></Ico>,
  stop: <Ico><path d="M0 0h16v16H0z" fill="#00aeff" /></Ico>,
  bugaim: <Bug><circle cx="10.500" cy="10.500" r="3.800" stroke={B} strokeWidth="1.400" fill="#cce6fb" /><path d="M10.500 5v11M5 10.500h11" stroke={B} strokeWidth="1.200" /></Bug>,
  pause: <Ico><path d="M0 0h6.500v16H0zM9.500 0H16v16H9.500z" fill="#00aeff" /></Ico>,
  over: <Ico><path d="M0 2h13M0 5.500h11M0 9h7M0 12.500h7" stroke={G} strokeWidth="1.800" /><path d="M8.500 7l7 4.500-7 4.500z" fill={G} /></Ico>,
  into: <Ico><path d="M0 0l4 4-4 4zM5 4h10M5 7.500h10M3 11h12M3 14.500h12" stroke={G} strokeWidth="1.600" fill={G} /></Ico>,
  out: <Ico><path d="M0 7l4 4-4 4zM5 2h10M5 5.500h10M6 9h9M6 12.500h9" stroke={G} strokeWidth="1.600" fill={G} /></Ico>,
  calc: <Ico><path d="M1 1h14v14H1z" stroke={G} strokeWidth="1.600" /><path d="M3 3h10v4H3zM3 9h2v2H3zM7 9h2v2H7zM11 9h2v2h-2zM3 12h2v2H3zM7 12h2v2H7zM11 12h2v2h-2z" fill={G} /></Ico>,
  bugred: <Bug><circle cx="13.200" cy="9" r="2.600" fill="#d0142c" /><circle cx="9.500" cy="13" r="2.900" fill="#d0142c" /></Bug>,
  bugfind: <Bug><circle cx="10.500" cy="10" r="3.500" stroke={B} strokeWidth="1.700" fill="#fff" /><path d="M13 12.500l3 3.500" stroke={B} strokeWidth="1.900" /></Bug>,
  bugx: <Bug><path d="M8 8q3-1 3.500 3.500T15 15M15 8q-2 0-3.500 3.500T7 15" stroke={B} strokeWidth="1.900" /></Bug>,
  buglist: <Bug><path d="M7 8h9M7 10.500h9M7 13h9M7 15.500h9" stroke={B} strokeWidth="1.600" /></Bug>,
};
const toolRow =
  "open openx | save v g undo redo | cut copy paste trash v g boxadd boxaim doc V camera db v g record V play stop S bugaim v _ g pause | over into out | calc | bugred bugfind bugx buglist v".split(" ");

function ToolItems() {
  return (
    <>
      {toolRow.map((t, i) => {
        if (t === "|") return <Sep key={i} />;
        if (t === "g") return <Grip key={i} />;
        if (t === "v") return <CaretCell key={i}><Down c="#000" w={6} /></CaretCell>;
        if (t === "V") return <Tool key={i} $w={14} aria-label="More"><Down c="#777" w={7} /></Tool>;
        if (t === "_") return <Tool key={i} as="span" $w={14} />;
        if (t === "S") return <StopText key={i}>Stop</StopText>;
        return <Tool key={i} $on={t === "bugaim"} aria-label={t}>{tools[t]}</Tool>;
      })}
    </>
  );
}

const PinIcon = () => (
  <svg width="12" height="14" viewBox="0 0 12 14" fill="none" stroke="#888"><path d="M3.500.5h5v5l2.500 3H1l2.500-3zM6 8.500V14M7 1v5" /></svg>
);
const SmallX = () => (
  <svg width="11" height="9" viewBox="0 0 11 9"><path d="M1.500 1l8 7M9.500 1l-8 7" stroke="#4a4f66" strokeWidth="3.200" /><path d="M1.500 1l8 7M9.500 1l-8 7" stroke="#e8eef6" strokeWidth="1.400" /></svg>
);
const Help = () => (
  <svg width="9" height="11" viewBox="0 0 9 11"><path d="M1.500 3.500q0-2.500 3-2.500t3 2.300q0 1.200-1.500 2T4.500 7.500M4.500 8.700v1.800" stroke="#4a4f66" strokeWidth="3" fill="none" /><path d="M1.500 3.500q0-2.500 3-2.500t3 2.300q0 1.200-1.500 2T4.500 7.500M4.500 8.700v1.800" stroke="#e8eef6" strokeWidth="1.300" fill="none" /></svg>
);

function TestComplete() {
  return (
    <TcWindow>
      <TcTitle>
        <TcLogo s={16} />
        TestComplete - C:\AutomationSuite\Regression\3.28\ENAU\Odyssey\Odyssey.pjs
        <Spacer />
        <Caption $gap={35}><MinIcon /><MaxIcon /><CloseIcon /></Caption>
      </TcTitle>
      <MenuRow>
        <Grip $lead />
        <MenuItem>File</MenuItem>
        <MenuItem>Edit</MenuItem>
        <MenuItem>View</MenuItem>
        <MenuPlain>Te<Under>s</Under>t</MenuPlain>
        <MenuItem>Debug</MenuItem>
        <MenuItem>Tools</MenuItem>
        <MenuItem>Help</MenuItem>
        <Down c="#000" w={6} />
        <Spacer />
        <svg width="14" height="15" viewBox="0 0 14 15" fill="none" stroke="#555" strokeWidth="1.300"><path d="M1 12h12q-2-2-2-4V5.500a4 4 0 00-8 0V8q0 2-2 4zM5.500 13.500h3M7 0v1.500" /></svg>
      </MenuRow>
      <Toolbar>
        <Grip $lead />
        <NewButton><span><Under>N</Under>ew</span><Down c="#000" w={6} /></NewButton>
        <Sep />
        <ToolItems />
      </Toolbar>
      <TcBody>
        <Strip />
        <WorkCol>
          <TopTabs>
            <TopTab $on>Project Workspace</TopTab>
            <TopTab>Object Browser</TopTab>
          </TopTabs>
          <Frame>
            <PaneHead>
              <svg width="16" height="16" viewBox="0 0 16 16"><path d="M.5 1.500h12v13H.5z" fill="#c5d5e5" stroke="#777" /><path d="M1 3h11" stroke="#777" strokeWidth="2" /><path d="M15.500 1l-8 11" stroke={B} strokeWidth="3" /></svg>
              Workspace
              <Spacer />
              <PaneButton aria-label="Help"><Help /></PaneButton>
              <PaneButton aria-label="Maximise"><svg width="11" height="9" viewBox="0 0 11 9"><path d="M1 1h9v7H1z" fill="#e8eef6" stroke="#4a4f66" strokeWidth="1.500" /><path d="M3.500 3.500h4v2h-4z" stroke="#4a4f66" fill="none" /></svg></PaneButton>
              <PaneButton aria-label="Close"><SmallX /></PaneButton>
            </PaneHead>
            <Canvas />
            <WatchFrame>
              <PaneHead>
                {tools.bugfind}
                Watch List
                <Spacer />
                <PaneButton aria-label="Help"><Help /></PaneButton>
                <PaneButton $flat aria-label="Pin"><PinIcon /></PaneButton>
                <PaneButton aria-label="Close"><SmallX /></PaneButton>
              </PaneHead>
              <WatchBox>
                <WatchClip>
                  <WatchTable>
                    <colgroup><col width="357" /><col width="380" /><col /></colgroup>
                    <thead><tr><th>Expression</th><th>Value</th><th>Type</th></tr></thead>
                    <tbody>
                      {["moduleName", "moduleName", "obj_ModuleArr.length", "txt_existingMssg", "urgencySelectedLbl", "urgencySelectedLbl"].map((n, i) => (
                        <tr key={i}>
                          <td>
                            <WatchLabel>
                              <Check type="checkbox" defaultChecked />
                              <svg width="10" height="12" viewBox="0 0 10 12"><path d="M0 2L4 0l6 6v3l-4 3-6-6z" fill="#f0b429" /><path d="M0 2l6 6.500V12L0 6z" fill="#d29410" /></svg>
                              {n}
                            </WatchLabel>
                          </td>
                          <td /><td />
                        </tr>
                      ))}
                    </tbody>
                  </WatchTable>
                </WatchClip>
                <VScroll $w={15}>
                  <ScrollArrow $h={17} aria-label="Up"><Chevron up s={8} /></ScrollArrow>
                  <Thumb $h={61} />
                  <Spacer />
                  <ScrollArrow $h={17} aria-label="Down"><Chevron s={8} /></ScrollArrow>
                </VScroll>
              </WatchBox>
            </WatchFrame>
            <BottomTabs>
              <BottomTab>Call Stack</BottomTab>
              <BottomTab>Locals</BottomTab>
              <BottomTab $on>Watch List</BottomTab>
              <BottomTab>Breakpoints</BottomTab>
            </BottomTabs>
          </Frame>
        </WorkCol>
      </TcBody>
      <DockRow><span /><span /><span /></DockRow>
      <StatusBar>
        <StatusCell /><StatusCell />
        <StatusCell><span>CAPS</span><span>NUM</span><span>SCRL</span></StatusCell>
        <StatusCell /><StatusCell $bare />
        <svg width="10" height="10" viewBox="0 0 10 10" fill="#aaa"><path d="M7 1h2v2H7zM7 4h2v2H7zM4 4h2v2H4zM7 7h2v2H7zM4 7h2v2H4zM1 7h2v2H1z" /></svg>
      </StatusBar>
      <CursorSpot $x={836} $y={624}><Cursor /></CursorSpot>
    </TcWindow>
  );
}

/* ---------- report browser ---------- */

const Report = styled.div`
  position: relative;
  flex: 959 1 0;
  min-width: 0;
  display: flex;
  flex-direction: column;
  background: #fff;
  padding-bottom: 32px;
`;
const ReportCaption = styled(Caption)`
  height: 55px;
  padding: 0 20px 35px 0;
`;
const Ribbon = styled.div`
  height: 90px;
  border: 1px solid #a9a9a9;
  border-width: 1px 1px 2px 0;
  padding: 2px 2px 2px 0;
  > div { height: 83px; background: #f4f4f4; }
`;
const PageRow = styled.div`
  flex: 1;
  min-height: 0;
  display: flex;
  border: 1px solid #a9a9a9;
  border-width: 0 1px 1px 0;
  padding: 2px 2px 2px 0;
`;
const Page = styled.main`
  flex: 1;
  min-width: 0;
  overflow: hidden;
  padding-right: 10px;
  font-family: ${VERDANA};
  font-size: 12px;
  line-height: 16px;
`;
const ChartBox = styled.div<{ $w: number; $h: number; $mt?: number }>`
  width: ${(p) => p.$w}px;
  height: ${(p) => p.$h}px;
  margin-top: ${(p) => p.$mt || 0}px;
  padding: 82px 4px 0 0;
  border: 1px solid #ececec;
  border-left: 0;
  ${(p) => !p.$mt && css`border-top: 0;`}
`;
const Percent = styled.div`
  height: 16px;
  padding-left: 18px;
  background: #f00;
  color: #fff;
  font-size: 13px;
  font-weight: bold;
`;
const Grid = styled.table<{ $mt: number }>`
  margin: ${(p) => p.$mt}px 0 0 -4px;
  border: 1px solid #ececec;
  border-spacing: 2px;
  table-layout: fixed;
  th { background: #039; color: #fff; padding: 4px 0; }
  td { border: 1px solid #ececec; padding: 3px 0 0; text-align: center; }
  td:first-child { text-align: left; white-space: nowrap; vertical-align: top; font-size: 13px; }
`;
const WideGrid = styled(Grid)`
  width: calc(100% + 4px);
  th { height: 40px; }
  th:first-child { padding-right: 156px; }
  td { height: 27px; padding: 0; }
  td:first-child { vertical-align: middle; }
`;
const StepGrid = styled(Grid)`
  width: 531px;
  th:first-child { text-align: left; }
`;
const StepRow = styled.tr<{ $tall?: boolean }>`
  height: ${(p) => (p.$tall ? 41 : 25)}px;
`;
const Status = styled.span<{ $c: string }>`
  color: ${(p) => p.$c};
`;
const ViewLink = styled.a`
  color: purple;
`;
const Rule = styled.div<{ $mt: number }>`
  height: 2px;
  margin-top: ${(p) => p.$mt}px;
  border-top: 1px solid #999;
  border-bottom: 1px solid #eee;
`;
const TopLink = styled.a`
  display: block;
  margin-top: 21px;
  text-align: right;
  font-family: "Liberation Serif", serif;
  font-size: 16px;
  line-height: 20px;
  font-weight: bold;
  color: #0563c1;
`;
const Indicator = styled.div`
  position: absolute;
  top: 24px;
  right: 9px;
  display: flex;
  align-items: center;
  width: 103px;
  height: 41px;
  padding: 0 10px 0 3px;
  justify-content: space-between;
  border: 1px solid #aaa;
  border-radius: 4px;
  background: #f1f1f1;
`;
const IndicatorSep = styled.span`
  width: 1px;
  height: 36px;
  background: #bbb;
`;
const Balloon = styled.div`
  position: absolute;
  top: 68px;
  right: 9px;
  width: 69px;
  height: 39px;
  padding: 3px;
  border: 1px solid #888;
  background: #fff;
  text-align: right;
  font-family: ${TAHOMA};
  font-size: 11px;
  line-height: 15px;
  > div { padding-right: 3px; }
  > div:first-child { border-bottom: 1px solid #000; }
`;

const steps: [string, string, string, string, boolean?][] = [
  ["d question set Chest Pain opened", "N/A", "PASS", "16:42:20", true],
  ["s displayed in the overlay", "N/A", "PASS", "16:42:21"],
  ["uestion set Chest Pain opened", "N/A", "PASS", "16:42:24", true],
  ["d aortic aneurysm is successully", "N/A", "PASS", "16:42:31", true],
  ["n add question set search result", "N/A", "PASS", "16:42:36"],
  ["", "View", "FAIL", "16:42:47"],
];

function ReportWindow() {
  return (
    <Report>
      <ReportCaption $gap={36}><MinIcon /><RestoreIcon /><CloseIcon /></ReportCaption>
      <Ribbon><div /></Ribbon>
      <PageRow>
        <Page>
          <ChartBox $w={190} $h={152}><Percent>100.0%</Percent></ChartBox>
          <WideGrid $mt={42}>
            <colgroup><col /><col width="156" /><col width="117" /><col width="117" /></colgroup>
            <thead><tr><th>Description</th><th>Result</th><th>StartTime<br />(H:M:S)</th><th>EndTime<br />(H:M:S)</th></tr></thead>
            <tbody>
              <tr>
                <td><Status $c="#f00">the display clinical warning using static text with 3 threshold values</Status></td>
                <td><Status $c="#f00">FAIL</Status></td>
                <td>16:40:35</td>
                <td>16:42:48</td>
              </tr>
            </tbody>
          </WideGrid>
          <Rule $mt={6} />
          <ChartBox $w={123} $h={92} $mt={69} />
          <StepGrid $mt={60}>
            <colgroup><col /><col width="92" /><col width="102" /><col width="101" /></colgroup>
            <thead><tr><th>n</th><th>ScreenShot</th><th>Result</th><th>Step<br />Executed<br />Time</th></tr></thead>
            <tbody>
              {steps.map(([text, shot, result, time, tall]) => (
                <StepRow key={time} $tall={tall}>
                  <td>{text}</td>
                  <td>{shot === "View" ? <ViewLink href="#">View</ViewLink> : shot}</td>
                  <td><Status $c={result === "PASS" ? "#008000" : "#f00"}>{result}</Status></td>
                  <td>{time}</td>
                </StepRow>
              ))}
            </tbody>
          </StepGrid>
          <TopLink href="#">Top</TopLink>
          <Rule $mt={24} />
        </Page>
        <VScroll $w={17}>
          <ScrollArrow $h={42} aria-label="Up"><Chevron up s={12} /></ScrollArrow>
          <Thumb $h={564} $top={218} />
          <ScrollArrow $h={26} aria-label="Down"><Chevron s={12} /></ScrollArrow>
        </VScroll>
      </PageRow>
      <Indicator>
        <TcLogo s={34} />
        <IndicatorSep />
        {tools.pause}
        {tools.stop}
      </Indicator>
      <Balloon><div>Stopping...</div><div>Odyssey</div></Balloon>
    </Report>
  );
}

const LINE = "#76b9ed";

export default function App() {
  return (
    <Desktop>
      <Global />
      <LeftMonitor>
        <IeWindow>
          <IeCaption $gap={36}><MinIcon /><RestoreIcon /><CloseIcon /></IeCaption>
          <IeNav>
            <RoundButton $s={37} aria-label="Back"><svg width="23" height="21" viewBox="0 0 23 21"><path d="M10 1L1 10.500 10 20h3.500L7 13h15V8H7l6.500-7z" fill="#fff" stroke="#999" /></svg></RoundButton>
            <RoundButton $s={26} aria-label="Forward"><svg width="15" height="14" viewBox="0 0 15 14"><path d="M8.500 1L14 7l-5.500 6H6l4-4.500H1v-3h9L6 1z" fill="#fff" stroke="#999" /></svg></RoundButton>
            <Field>
              <svg width="12" height="16" viewBox="0 0 12 16"><path d="M.5.5h8l3 3v12H.5z" fill="#fff" stroke="#888" /><path d="M2.500 7h7v6h-7z" fill="#2f7fd0" /><path d="M2.500 13l3-3 4 3z" fill="#123f86" /></svg>
              <FieldInput aria-label="Address" defaultValue={"C:\\AutomationSuite\\Regression\\3.28\\ENAU\\Odyssey\\Results All\\Results\\Module Results\\Snapshot\\4_14_23_4_56.png"} />
              <Down />
              <svg width="12" height="12" viewBox="0 0 12 12" fill="none" stroke="#666" strokeWidth="1.800"><path d="M10 3.500A4.500 4.500 0 1010.500 7M10.500 0v4h-4" /></svg>
            </Field>
            <Field $w={339}>
              <FieldInput aria-label="Search" defaultValue="Search..." />
              <svg width="14" height="14" viewBox="0 0 14 14" fill="none" stroke="#666" strokeWidth="1.800"><circle cx="8.500" cy="5" r="4" /><path d="M5.500 8L1 13" /></svg>
              <Down />
            </Field>
            <IeTools>
              <svg width="17" height="16" viewBox="0 0 17 16" fill="none" stroke="#888"><path d="M1 8.500l7.500-8 7.500 8-1 1-1.500-1.300V15H10v-5H7v5H3.500V8.200L2 9.500z" /></svg>
              <svg width="17" height="16" viewBox="0 0 17 16" fill="none" stroke="#888"><path d="M8.500.8l2 5.200 5.700.3-4.500 3.500 1.600 5.400-4.800-3-4.800 3 1.600-5.400L.8 6.300 6.500 6z" /></svg>
              <svg width="17" height="17" viewBox="0 0 17 17" fill="none" stroke="#888"><circle cx="8.500" cy="8.500" r="2.500" /><circle cx="8.500" cy="8.500" r="5.500" /><circle cx="8.500" cy="8.500" r="6.900" strokeWidth="2" strokeDasharray="2.700 2.700" /></svg>
              <svg width="17" height="17" viewBox="0 0 17 17"><circle cx="8.500" cy="8.500" r="8" fill="#fbd535" stroke="#c9a227" /><path d="M6 4.500v3M11 4.500v3M4.500 10.500q4 4 8 0" stroke="#6b5310" strokeWidth="1.400" fill="none" /></svg>
            </IeTools>
          </IeNav>
          <IeTabs>
            <IeTab><IeIcon /><TabText>C:\AutomationSuite\Regressio...</TabText></IeTab>
            <IeTab><IeIcon /><TabText>C:\AutomationSuite\Regressio...</TabText></IeTab>
            <IeTab $on><IeIcon /><TabText>C:\AutomationSuite\Regres...</TabText><svg width="15" height="9" viewBox="0 0 15 9"><path d="M1 1l7 7M8 1L1 8" stroke="#888" strokeWidth="2" /></svg></IeTab>
            <NewTab aria-label="New tab"><svg width="14" height="16" viewBox="0 0 14 16"><path d="M.5 3.500h9v12h-9z" fill="#fff" stroke="#888" /><path d="M10.500 0v7M7 3.500h7M8 1l5 5M13 1L8 6" stroke="#f0a020" /></svg></NewTab>
          </IeTabs>
          <Odyssey />
        </IeWindow>
        <Bar $bg="linear-gradient(90deg, #3b3024 0%, #352b21 26%, #222223 30%, #26282a 50%, #3b3e41 56%, #3d3f42 100%)">
          <TaskCell $w={48} aria-label="Start"><WinLogo /></TaskCell>
          <SearchBox>
            <SearchGlyph />
            <SearchInput placeholder="Type here to search" aria-label="Type here to search" />
            <AdvPill><svg width="14" height="13" viewBox="0 0 14 13"><path d="M0 12.500L7 0l7 12.500-5-3.500-2-4-2 4z" fill="#fff" /></svg>advanced</AdvPill>
          </SearchBox>
          <TaskCell $w={50} aria-label="Task view"><TaskView /></TaskCell>
          <TaskCell aria-label="File Explorer"><Folder /></TaskCell>
          <TaskCell aria-label="Firefox"><Firefox /></TaskCell>
          <TaskCell $line={LINE} aria-label="Teams"><Teams /></TaskCell>
          <TaskCell aria-label="App"><AppWindow /></TaskCell>
          <TaskCell aria-label="Database tool"><DbTool /></TaskCell>
          <TaskCell $hot $line="#ff7a00" aria-label="Outlook"><Outlook /></TaskCell>
          <TaskCell $line={LINE} aria-label="Internet Explorer"><IeIcon s={25} /></TaskCell>
          <Spacer />
          <Tray>
            <Weather>
              <svg width="23" height="22" viewBox="0 0 23 22"><circle cx="11.500" cy="8.500" r="8.500" fill="#fba62b" /><path d="M5 21.500a4 4 0 01-.5-8 6 6 0 0111-1.500 4.500 4.500 0 013 9.500z" fill="#dbe7fb" /></svg>
              38°C <span>Partly sunny</span>
            </Weather>
            <svg width="12" height="8" viewBox="0 0 12 8"><path d="M1 7l5-5.500L11 7" stroke="#fff" strokeWidth="1.300" fill="none" /></svg>
            <svg width="16" height="12" viewBox="0 0 16 12" fill="none" stroke="#fff"><path d="M4.500 4h9.500v7H4.500zM15 6v3M1 2h4v3H3zM2 0v2M4 0v2M3 5v6h2" /><path d="M6 5.500h6.500v4H6z" fill="#fff" stroke="none" /></svg>
            <svg width="16" height="14" viewBox="0 0 16 14" fill="none" stroke="#fff"><path d="M.5 5h2L6 2v10L2.500 9h-2zM8 5q1.500 2 0 4M10.500 3.500q2.500 3.500 0 7M13 2q3.500 5 0 10" /></svg>
            <svg width="13" height="13" viewBox="0 0 13 13" fill="none" stroke="#fff"><path d="M1 12.500A11.500 11.500 0 0112.500 1M4 12.500A8.500 8.500 0 0112.500 4M7 12.500A5.500 5.500 0 0112.500 7" /><circle cx="11" cy="11" r="1.500" fill="#fff" /></svg>
            <span>ENG</span>
            <Clock $pad={7}>05:14 PM<br />19-04-2023</Clock>
            <svg width="25" height="26" viewBox="0 0 25 26"><path d="M0 1h16v13H8l-3 3.500V14H0z" fill="#fff" /><path d="M2.500 4.500h11M2.500 7.500h11M2.500 10.500h8" stroke="#3d3f42" /><circle cx="16" cy="17" r="8" fill="#3d3f42" stroke="#aaa" /><path d="M18.500 13h-4l-.4 3.600q4-.9 4.100 1.900-.1 2.600-4.200 2" stroke="#fff" strokeWidth="1.200" fill="none" /></svg>
            <TrayEnd />
          </Tray>
        </Bar>
      </LeftMonitor>
      <RightMonitor>
        <RightTop>
          <TestComplete />
          <ReportWindow />
        </RightTop>
        <Bar $bg="linear-gradient(90deg, #41362a 0%, #3e3328 24%, #202022 29%, #202123 48%, #3a3d40 54%, #3d4043 100%)">
          <TaskCell $w={48} aria-label="Start"><WinLogo /></TaskCell>
          <TaskCell $w={48} aria-label="Search"><SearchGlyph /></TaskCell>
          <TaskCell $w={50} aria-label="Task view"><TaskView /></TaskCell>
          <TaskCell $line={LINE} aria-label="Chrome"><Chrome /></TaskCell>
          <TaskCell $line={LINE} aria-label="Outlook"><Outlook mail /></TaskCell>
          <TaskCell $line={LINE} aria-label="File Explorer"><Folder /></TaskCell>
          <TaskCell $line={LINE} aria-label="Notepad"><Notepad /></TaskCell>
          <TaskCell $line={LINE} aria-label="Excel"><Excel /></TaskCell>
          <TaskCell $line={LINE} aria-label="Database tool"><DbTool /></TaskCell>
          <TaskCell $line={LINE} aria-label="App"><AppWindow /></TaskCell>
          <TaskCell $line={LINE} aria-label="TestComplete"><TcLogo s={25} /></TaskCell>
          <Spacer />
          <Clock $pad={6}>05:14 PM<br />19-04-2023</Clock>
        </Bar>
      </RightMonitor>
    </Desktop>
  );
}
